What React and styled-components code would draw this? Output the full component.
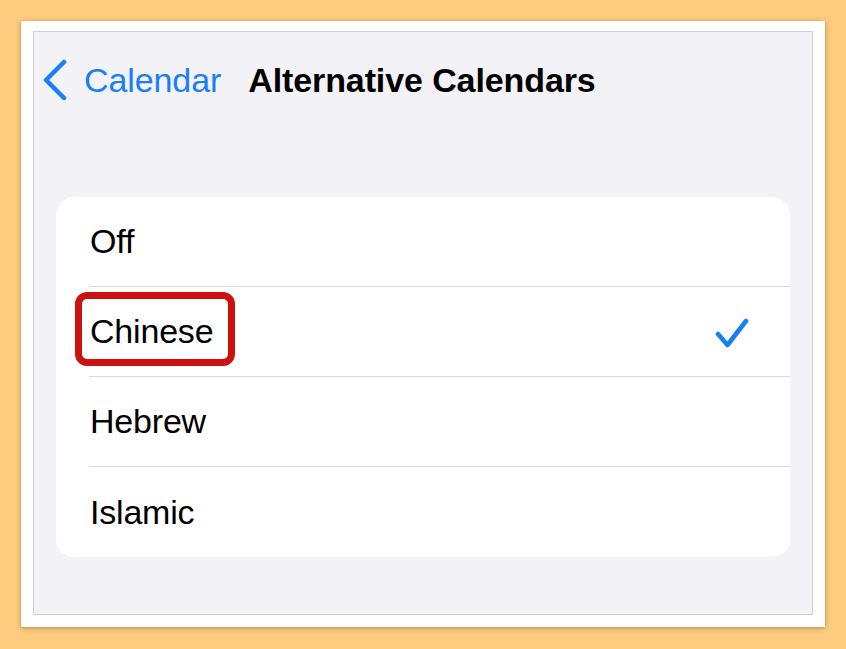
import styled, { createGlobalStyle } from 'styled-components';

const GlobalStyle = createGlobalStyle`
    html, body {
        margin: 0;
        padding: 0;
        background: #fecb7f;
    }
    body {
        font-family: "Liberation Sans", Arial, sans-serif;
    }
`;

const options = [
    { id: 'off', label: 'Off' },
    { id: 'chinese', label: 'Chinese', selected: true, marked: true },
    { id: 'hebrew', label: 'Hebrew' },
    { id: 'islamic', label: 'Islamic' },
];

function ChevronLeft() {
    return (
        <svg width="26" height="42" viewBox="0 0 26 42">
            <polyline
                points="22,3 4,21 22,39"
                fill="none"
                stroke="#1a7ef5"
                strokeWidth="4.5"
                strokeLinecap="round"
                strokeLinejoin="round"
            />
        </svg>
    );
}

function CheckMark() {
    return (
        <svg width="34" height="32" viewBox="0 0 34 32">
            <polyline
                points="3,17 12.5,28 31,4"
                fill="none"
                stroke="#1a7ef5"
                strokeWidth="4.6"
                strokeLinecap="round"
                strokeLinejoin="round"
            />
        </svg>
    );
}

export default function App() {
    return (
        <Page>
            <GlobalStyle />
            <Frame>
                <Panel>
                    <Header>
                        <BackButton>
                            <ChevronLeft />
                            <BackLabel>Calendar</BackLabel>
                        </BackButton>
                        <Title>Alternative Calendars</Title>
                    </Header>

                    <Card>
                        {options.map((option, index) => (
                            <Row key={option.id}>
                                <RowInner last={index === options.length - 1}>
                                    <RowLabel>
                                        {option.label}
                                        {option.marked && <Highlight />}
                                    </RowLabel>
                                    {option.selected && (
                                        <CheckSlot>
                                            <CheckMark />
                                        </CheckSlot>
                                    )}
                                </RowInner>
                            </Row>
                        ))}
                    </Card>
                </Panel>
            </Frame>
        </Page>
    );
}

const Page = styled.div`
    width: 846px;
    height: 649px;
    padding: 21px;
    box-sizing: border-box;
`;

const Frame = styled.div`
    width: 804px;
    height: 606px;
    background: #ffffff;
    padding: 10px 12px 12px 12px;
    box-sizing: border-box;
    box-shadow: 0 1px 5px rgba(90, 60, 20, 0.45);
`;

const Panel = styled.div`
    width: 100%;
    height: 100%;
    box-sizing: border-box;
    border: 1px solid #cfcfd3;
    background: #f2f2f7;
    display: flex;
    flex-direction: column;
`;

const Header = styled.div`
    height: 96px;
    display: flex;
    align-items: center;
    padding-left: 8px;
    gap: 27px;
`;

const BackButton = styled.div`
    display: flex;
    align-items: center;
    gap: 16px;
`;

const BackLabel = styled.span`
    font-size: 34px;
    color: #1a7ef5;
    letter-spacing: -0.1px;
`;

const Title = styled.h1`
    margin: 0;
    font-size: 34px;
    font-weight: 700;
    color: #000000;
    letter-spacing: -0.1px;
`;

const Card = styled.div`
    margin: 69px 22px 0 22px;
    background: #ffffff;
    border-radius: 18px;
`;

const Row = styled.div`
    height: 90px;
    padding-left: 33px;
    box-sizing: border-box;
`;

const RowInner = styled.div`
    height: 100%;
    box-sizing: border-box;
    display: flex;
    align-items: center;
    justify-content: space-between;
    padding-left: 1px;
    padding-right: 41px;
    border-bottom: ${props => (props.last ? 'none' : '1px solid #d9d9dd')};
`;

const RowLabel = styled.span`
    position: relative;
    font-size: 34px;
    color: #000000;
    letter-spacing: -0.2px;
`;

const Highlight = styled.span`
    position: absolute;
    left: -15px;
    top: -20px;
    width: 160px;
    height: 74px;
    box-sizing: border-box;
    border: 7px solid #cc1111;
    border-radius: 12px;
    pointer-events: none;
`;

const CheckSlot = styled.span`
    display: flex;
    align-items: center;
    margin-top: 2px;
`;
